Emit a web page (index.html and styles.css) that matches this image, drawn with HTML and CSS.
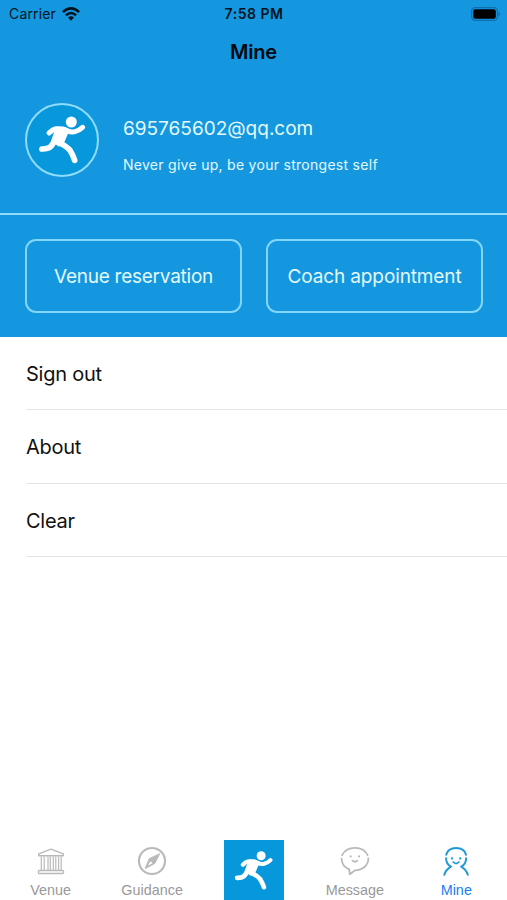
FILE: index.html
```html
<!DOCTYPE html>
<html lang="en">
<head>
    <meta charset="UTF-8">
    <meta name="viewport" content="width=device-width, initial-scale=1.0">
    <title>Mine</title>
    <link rel="stylesheet" href="styles.css">
</head>
<body>
    <svg width="0" height="0" class="defs">
        <symbol id="runner" viewBox="80 75 150 150">
            <circle cx="183" cy="96" r="16.5" fill="#fff"/>
            <g fill="none" stroke="#fff" stroke-width="15" stroke-linecap="round" stroke-linejoin="round">
                <path d="M116 129Q128 116 140 116L158 117L171 122Q183 128 194 125Q207 122 217 112"/>
                <path d="M142 122L132 150Q126 178 95 177" stroke-width="17"/>
                <path d="M149 159Q170 170 179 181Q188 195 193 211" stroke-width="17"/>
            </g>
            <path d="M138 110L166 111L176 124L162 157L146 170L129 158Z" fill="#fff"/>
        </symbol>
    </svg>
    <div class="page">
        <header class="top">
            <div class="status">
                <div class="carrier">
                    <span>Carrier</span>
                    <svg width="18" height="14" viewBox="0 0 18 14">
                        <g fill="none" stroke="#00131f" stroke-width="2.5">
                            <path d="M0.9 5.1Q9-2.4 17.1 5.1"/>
                            <path d="M3.9 8.3Q9 3.6 14.1 8.3"/>
                        </g>
                        <path d="M6 10.6Q9 8 12 10.6L9 13.8Z" fill="#00131f"/>
                    </svg>
                </div>
                <div class="time">7:58 PM</div>
                <div class="battery">
                    <svg width="30" height="14" viewBox="0 0 30 14">
                        <rect x="0.6" y="0.6" width="25.8" height="12.8" rx="3.6" fill="none" stroke="#0c6fae" stroke-width="1.2"/>
                        <rect x="2.2" y="2.2" width="22.6" height="9.6" rx="2" fill="#000"/>
                        <path d="M27.5 4.8Q29.3 5.5 29.3 7T27.5 9.2Z" fill="#0c6fae"/>
                    </svg>
                </div>
            </div>
            <h1>Mine</h1>
            <div class="profile">
                <div class="avatar"><svg width="50" height="50"><use href="#runner"/></svg></div>
                <div class="info">
                    <div class="email">695765602@qq.com</div>
                    <div class="motto">Never give up, be your strongest self</div>
                </div>
            </div>
            <div class="actions">
                <button class="venue-btn">Venue reservation</button>
                <button class="coach-btn">Coach appointment</button>
            </div>
        </header>
        <ul class="menu">
            <li class="sign-out">Sign out</li>
            <li class="about">About</li>
            <li class="clear">Clear</li>
        </ul>
        <nav class="tabs">
            <a class="tab">
                <svg width="28" height="30" viewBox="0 -1.5 28 30" fill="none" stroke="#b9b9b9" stroke-width="1.4" stroke-linejoin="round">
                    <path d="M1.7 6.4L14 1.7L26.3 6.4V8.3H1.7Z"/>
                    <path d="M4.3 9V22.5M7.2 9V22.5M11 9V22.5M13.3 9V22.5M16.3 9V22.5M18.8 9V22.5M21.6 9V22.5M24.2 9V22.5" stroke-width="1.2"/>
                    <rect x="1.4" y="23" width="25.2" height="3" rx="1.2"/>
                </svg>
                <span>Venue</span>
            </a>
            <a class="tab">
                <svg width="30" height="30" viewBox="0 0 30 30" fill="none" stroke="#b9b9b9">
                    <circle cx="15" cy="15" r="13" stroke-width="2.1"/>
                    <path d="M22.6 7.8L17.8 17.4L8.2 22.6L12.2 12.8Z" fill="#b9b9b9" stroke-linejoin="round"/>
                    <path d="M13.4 15.2L15.6 17.2L11.1 19.6Z" fill="#fff" stroke="none"/>
                </svg>
                <span>Guidance</span>
            </a>
            <a class="tab tab-run"><svg width="41" height="41"><use href="#runner"/></svg></a>
            <a class="tab">
                <svg width="30" height="30" viewBox="0 0 30 30" fill="none" stroke="#b9b9b9" stroke-width="1.8" stroke-linecap="round" stroke-linejoin="round">
                    <path d="M2.2 9.2C4.5 4.2 9.5 1.9 15 1.9C21 1.9 25.5 4.5 27.6 9.2M28.3 12.4C28.6 19.5 22.2 24.2 15.1 24.3L9.8 28.2L9.3 23.4C4.6 21.6 1.6 17.5 1.6 12.6"/>
                    <path d="M12.5 14.6Q15 16.8 17.4 14.6"/>
                    <path d="M10.7 10.2V10.5M19 10.2V10.5" stroke-width="2.1"/>
                </svg>
                <span>Message</span>
            </a>
            <a class="tab active">
                <svg width="30" height="30" viewBox="0 0 30 30" fill="none" stroke="#209ad7" stroke-width="2" stroke-linecap="round" stroke-linejoin="round">
                    <path d="M5.2 8.8C6.3 4.2 10.2 2 15.1 2S24 4.2 25 8.8M5.1 12.2C5.1 16.2 7 19 10 20.7C6.8 22.6 4.4 25.2 3.3 28.7M25.1 12.2C25.1 16.2 23.2 19 20.2 20.7C23.4 22.6 25.7 25.2 26.8 28.7"/>
                    <path d="M12.3 16Q15.1 19 17.9 16" stroke-width="1.8"/>
                    <path d="M11 12.3V12.6M19.2 12.3V12.6" stroke-width="2.3"/>
                </svg>
                <span>Mine</span>
            </a>
        </nav>
    </div>
</body>
</html>
```
FILE: styles.css
```css
body {
    font-family: Inter, "Liberation Sans", sans-serif;
    background-color: #fff;
    margin: 0;
    padding: 0;
}
.defs {
    display: block;
}
.page {
    display: flex;
    flex-direction: column;
    height: 900px;
    overflow: hidden;
}
.top {
    height: 337px;
    background-color: #1497de;
}
.status {
    display: grid;
    grid-template-columns: 1fr auto 1fr;
    align-items: center;
    height: 28px;
    padding: 0 6px 0 9px;
    box-sizing: border-box;
    color: #00131f;
    font-size: 14px;
    line-height: 28px;
}
.carrier {
    display: flex;
    align-items: center;
    gap: 6px;
    letter-spacing: 0.15px;
}
.time {
    font-weight: 600;
    letter-spacing: 0.5px;
    margin-right: 2px;
}
.battery {
    display: flex;
    justify-content: flex-end;
}
h1 {
    margin: 0;
    height: 49px;
    line-height: 49px;
    text-align: center;
    color: #00080f;
    font-size: 20px;
    font-weight: 600;
    letter-spacing: -0.2px;
}
.profile {
    display: flex;
    height: 138px;
    padding: 26px 25px 0;
    box-sizing: border-box;
    border-bottom: 2px solid #8fdcfb;
}
.avatar {
    display: flex;
    align-items: center;
    justify-content: center;
    width: 74px;
    height: 74px;
    box-sizing: border-box;
    border: 2px solid #8fdcfb;
    border-radius: 50%;
    background-color: #0798dc;
}
.info {
    margin-left: 24px;
    color: #e2f9ff;
}
.email {
    margin-top: 14px;
    font-size: 19px;
    line-height: 24px;
}
.motto {
    margin-top: 14px;
    font-size: 14px;
    line-height: 20px;
    letter-spacing: 0.28px;
}
.actions {
    display: grid;
    grid-template-columns: 1fr 1fr;
    gap: 24px;
    padding: 24px 24px 24px 25px;
}
.actions button {
    height: 74px;
    padding: 0;
    border: 2px solid #83d5fa;
    border-radius: 11px;
    background: none;
    color: #e2f9ff;
    font-family: inherit;
    font-size: 19px;
    letter-spacing: -0.12px;
}
.actions .venue-btn {
    letter-spacing: -0.25px;
}
.menu {
    flex: 1;
    margin: 0;
    padding: 0 0 0 26px;
    list-style: none;
}
.menu li {
    height: 73.3px;
    line-height: 75px;
    box-sizing: border-box;
    border-bottom: 1px solid #e5e5e5;
    color: #111;
    font-size: 20px;
    letter-spacing: -0.25px;
}
.tabs {
    display: grid;
    grid-template-columns: repeat(5, 1fr);
    height: 60px;
}
.tab {
    display: flex;
    flex-direction: column;
    align-items: center;
    justify-content: space-between;
    padding: 6px 0 1px;
    color: #999;
    font-family: "Liberation Sans", Arial, sans-serif;
    font-size: 14.4px;
    line-height: 17px;
}
.tab-run {
    justify-self: center;
    justify-content: center;
    width: 60px;
    margin-left: 1px;
    padding: 0;
    background-color: #0798dc;
}
.active {
    color: #1681f7;
}
```
